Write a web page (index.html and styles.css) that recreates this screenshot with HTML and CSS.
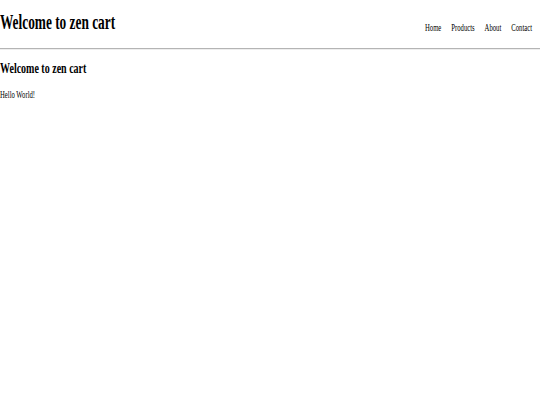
FILE: index.html
```html
<!DOCTYPE html>
<html>
<head>
<meta charset="utf-8">
<link rel="stylesheet" href="styles.css">
</head>
<body>
<div class="viewport">
  <div class="page">
    <header class="site-header">
      <h1 class="site-title">Welcome to zen cart</h1>
      <nav class="site-nav">
        <a href="#">Home</a>
        <a href="#">Products</a>
        <a href="#">About</a>
        <a href="#">Contact</a>
      </nav>
    </header>
    <main class="content">
      <h2 class="content-title">Welcome to zen cart</h2>
      <p class="content-text">Hello World!</p>
    </main>
  </div>
</div>
</body>
</html>
```
FILE: styles.css
```css
html, body {
  margin: 0;
  padding: 0;
  background: #fff;
}
.viewport {
  width: 540px;
  height: 405px;
  overflow: hidden;
}
.page {
  width: 810px;
  transform: scaleX(0.6667);
  transform-origin: 0 0;
  font-family: "Liberation Serif", "Times New Roman", serif;
  font-size: 10px;
  color: #000;
}
.site-header {
  display: flex;
  justify-content: space-between;
  align-items: flex-end;
  padding: 11px 12px 14px 0;
  border-bottom: 1px solid #b4b4b4;
  box-shadow: 0 1px 0 #eeeeee;
}
.site-title {
  margin: 0;
  font-size: 20px;
  font-weight: bold;
}
.site-nav {
  display: flex;
  gap: 15px;
  margin-bottom: 1px;
}
.site-nav a {
  color: #000;
  text-decoration: none;
}
.content {
  padding-top: 11px;
}
.content-title {
  margin: 0 0 12px;
  font-size: 15px;
  font-weight: bold;
}
.content-text {
  margin: 0;
}
```
